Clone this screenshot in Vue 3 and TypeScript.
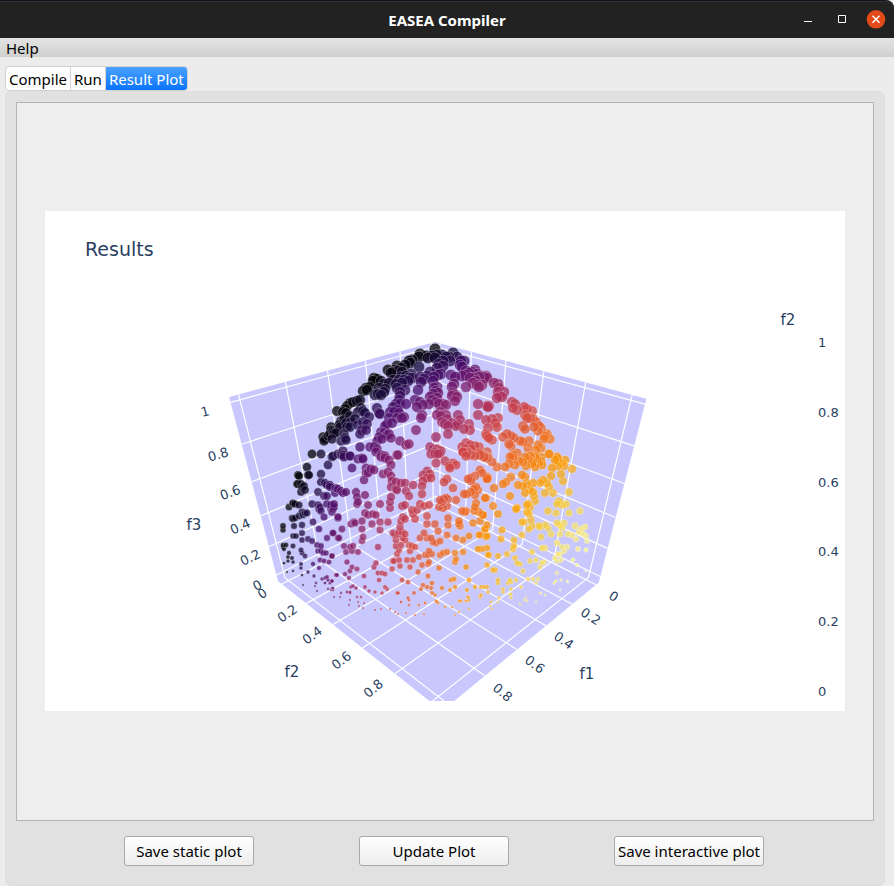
<script setup lang="ts">
import { ref } from 'vue'

type Vec = [number, number, number]
interface Marker { x: number; y: number; r: number; fill: string; depth: number }
interface Label { x: number; y: number; text: string; angle: number }

const tabs = ['Compile', 'Run', 'Result Plot']
const activeTab = ref('Result Plot')

// Homogeneous columns of the projection: origin and the three box axes.
const origin: Vec = [702.5, 808, 1.611]
const axisX: Vec = [-339.4, -49.2, -0.305]
const axisY: Vec = [78.9, -47.8, -0.306]
const axisZ: Vec = [-133.1, -360.3, -0.302]

function mix(a: number, b: number, c: number): Vec {
  return [0, 1, 2].map(i => origin[i] + a * axisX[i] + b * axisY[i] + c * axisZ[i]) as Vec
}
function project(a: number, b: number, c: number): string {
  const v = mix(a, b, c)
  return `${(v[0] / v[2]).toFixed(1)} ${(v[1] / v[2]).toFixed(1)}`
}
const s1 = (f: number) => 0.022 + 0.9425 * f
const s2 = (f: number) => 0.03 + 0.918 * f
const s3 = (f: number) => 0.042 + 0.935 * f

const walls = [
  [project(0, 0, 0), project(1, 0, 0), project(1, 0, 1), project(0, 0, 1)],
  [project(0, 0, 0), project(0, 1, 0), project(0, 1, 1), project(0, 0, 1)],
  [project(0, 0, 0), project(1, 0, 0), project(1, 1, 0), project(0, 1, 0)],
].map(p => `M${p.join('L')}Z`).join('')

const grid = [0, 0.2, 0.4, 0.6, 0.8, 1].map(f => [
  `M${project(s1(f), 0, 1)}L${project(s1(f), 0, 0)}L${project(s1(f), 1, 0)}`,
  `M${project(0, s2(f), 1)}L${project(0, s2(f), 0)}L${project(1, s2(f), 0)}`,
  `M${project(1, 0, s3(f))}L${project(0, 0, s3(f))}L${project(0, 1, s3(f))}`,
].join('')).join('')

const inferno: Vec[] = [
  [0, 0, 4], [27, 12, 65], [74, 12, 107], [120, 28, 109], [165, 44, 96],
  [207, 68, 70], [237, 105, 37], [251, 155, 6], [247, 209, 61], [252, 255, 164],
]
function colour(t: number): string {
  const p = Math.min(0.9999, Math.max(0, t)) * (inferno.length - 1)
  const i = Math.floor(p)
  const c = inferno[i].map((v, k) => Math.round(v + (inferno[i + 1][k] - v) * (p - i)))
  return `rgb(${c.join(',')})`
}

// Front members, as plot positions; their objectives follow from |f| = 1.
const front = `
435,349 420,354 419,357 426,356 428,358 432,356 435,358 437,355 442,355 446,357 449,357 453,353 457,357 450,361 443,361 461,361 464,361 460,365 462,367
409,361 412,360 410,363 405,365 401,368 397,366 395,370 393,372 391,373 388,370 398,371 402,372 374,378 377,379 373,381 381,381 384,384 370,387 367,390 363,391 366,388 379,388 385,389 378,394 375,395 381,395 384,392 360,400 357,401 350,403 353,402 347,406 345,409 343,412 346,413
389,383 393,380 396,384 399,380 401,377 404,380 406,376 409,378 412,378 411,374 408,381 402,383 397,388 405,390 400,392 419,367 437,368 443,366 439,364 430,372 424,379 420,377 427,376 421,382 418,390 438,375 441,374 434,377 451,375 455,377 433,381
466,371 469,373 472,372 475,370 477,374 479,377 474,378 470,378 466,375 473,383 477,385 479,387 476,381 484,377 487,378 462,376 454,384 452,387 466,387
434,388 436,391 438,393 433,394 430,397 432,400 437,398 436,402 437,387 439,404 443,404 446,405 453,393 455,395 457,397 452,396 455,401
420,402 423,405 417,407 422,415 421,418 415,400 429,404 440,412 437,415 441,416 446,415 447,419 442,422 445,424 448,426 452,423 456,426 458,424 460,420 458,415 469,424 470,430 464,429 478,404 487,406 478,415 486,420 488,428 487,436 489,438 448,434 436,437 416,430
400,396 399,400 396,404 400,404 406,404 398,410 393,407 390,412 394,412 399,413 404,417 402,418 397,418 389,418 387,424 392,423 385,426 380,414 377,408 379,413 384,433 387,435 391,438 381,432 379,437 382,439 377,441 389,434 400,441 406,445 409,444 397,455 374,447 370,447 377,449 381,457 385,458
361,408 363,411 365,413 358,412 369,417 355,419 350,416 344,420 346,423 341,421 351,422 350,427 347,427 358,425 363,422 367,424 362,430 366,430 360,434 339,425 331,430 334,433 332,439 340,427 344,434 345,438 341,441 346,440 343,451 342,455 344,457 360,447 350,456 362,458
430,447 433,449 437,449 435,452 438,454 441,451 431,454 462,447 466,443 470,445 465,449 468,452 471,449 463,452 475,446 479,447 482,455 485,457 466,456 488,458
337,411 331,427 333,431 328,436 323,437 324,441 325,439 330,434 336,433 312,454 321,454 333,456 338,454
307,467 308,475 309,475 299,476 298,475 298,484 297,484 301,484 304,486 302,487 305,490 301,492 321,474 328,465 321,482 325,483 327,485 330,487 318,492 324,496 327,496 335,493 338,489 289,507 293,504 295,504 299,505 293,503 312,504 318,505 320,507 321,511 319,509 327,504 334,504 331,509 333,509 324,517 292,518 295,518 293,519 299,516 302,512 305,513 307,513 303,515 313,522 283,526 283,530 294,526 302,525 319,529 338,517 333,533 302,533 293,536 296,536 302,540 308,539 312,541 327,538 338,538 283,545 286,545 283,547 284,549 293,546 317,545 321,546 301,550 302,553 305,556 289,553 288,557 292,558 288,561 293,562 284,563 318,551 321,551 323,553 326,553 332,556 320,560 324,561 329,562 301,564 301,568 313,564 319,568 287,572 293,571 308,572 302,575 314,576 337,575 322,579 325,578 327,577 328,580 332,581 316,583 303,585 315,586 330,583 325,583 332,588 328,589 333,590 317,591 334,597
332,457 341,454 344,455 350,456 358,459 363,459 352,468 376,452 381,455 385,456 389,460 398,455 391,465 366,468 369,471 371,469 368,473 366,473 374,470 364,480 383,474 388,472 391,476 392,481 391,487 396,482 401,483 405,483 396,489 397,490 406,491 391,497 390,502 409,496 413,485 423,475 427,471 430,474 427,478 423,481 431,478 422,486 422,494 444,482 447,479 453,488 438,450 440,453 435,454 436,463 445,461 449,466 450,468 453,463 456,465 463,452 467,453 471,455 475,456 479,453 480,455 484,457 488,457 487,452
330,485 336,488 341,491 346,492 343,493 331,505 334,507 332,512 338,518 333,533 342,529 339,538 356,492 357,497 358,502 365,495 357,504 368,505 380,504 390,508 365,513 368,515 373,514 376,515 402,506 405,505 420,504 424,506 429,505 417,510 412,510 413,514 427,516 403,517 405,519 401,521 415,519 388,522 380,522 372,524 362,521 354,522 351,524 362,529 355,523 380,530 400,527 399,532 393,533 395,535 398,534 402,532 405,534 403,538 396,540 363,537 362,541 427,524 435,524 424,533 427,538 420,538 431,538 438,531 448,518 448,525 459,524 460,526 459,521 447,535 456,538 463,540 440,541 436,543 433,542
440,500 444,499 446,498 448,499 442,502 456,500 439,507 443,508 447,506 464,494 467,494 471,492 474,489 476,487 478,490 475,495 468,479 471,478 471,481 475,476 482,473 487,477 487,479 476,503 475,507 474,511 462,511 465,512 466,511 479,512 483,515 473,523 480,521 487,525 485,529 479,535 481,535 469,536 487,536 485,498
344,546 350,547 353,546 346,552 352,551 358,552 332,556 347,562 352,567 357,569 350,571 349,578 345,574 336,575 332,581 364,576 378,547 396,546 399,550 397,554 405,540 409,545 412,546 401,545 415,547 410,551 399,560 394,561 393,561 407,560 413,560 419,557 429,551 425,555 428,555 432,554 429,562 428,564 422,565 410,567 400,566 392,569 376,563 374,567 378,573 382,573 385,574 379,580 402,580 408,582 418,572 428,576 439,568 440,555 443,553 447,552 455,553 456,559 455,562 463,552 466,567 451,580 454,579 469,580 478,549 482,549 487,548 488,555 487,565
351,587 353,586 356,588 365,587 369,591 375,592 385,587 387,589 382,593 397,593 398,593 408,598 423,585 432,583 431,588 427,587 421,589 414,593 432,593 442,588 450,590 455,587 467,590 475,587 481,587 487,587 468,597 480,597 333,588 331,590 350,592 357,597 341,593 340,597
481,376 484,377 486,376 482,385 494,383 498,384 499,388 498,392 500,396 502,397 497,398 504,392 489,406 488,407 512,402 515,404 513,408 517,410 524,407 527,409 532,411 525,415 527,418 530,418 523,426 525,429 533,419 536,422 539,426 534,427 541,428 538,431 547,434 545,436 550,439 544,439 492,419 498,418 495,423 497,427 486,434 492,440 507,434 503,437 511,436 514,438 511,446 509,444 520,441 523,442 529,441 528,448 538,445 541,448 536,450 517,453 484,455 513,458 525,457 530,456 535,457 549,454 557,457 558,459 565,460 541,457
485,456 487,458 492,462 497,467 505,467 509,464 515,465 519,461 510,457 513,455 523,462 528,459 531,457 533,462 537,459 526,466 532,464 539,463 542,465 535,467 541,461 549,454 555,460 559,461 562,463 558,466 552,468 564,466 572,469 561,474 551,476 563,481 480,470 487,478 488,478 494,488 503,484 506,482 511,477 522,475 525,477 518,485 523,486 527,484 533,483 540,483 543,480 547,483 549,487 545,493 553,493 525,493 533,492 530,490 534,496 569,492 510,496 535,501 528,504 530,507 527,505 486,498 493,506 517,508 516,509 527,512 529,514 559,501 557,504 562,505 566,504 548,511 556,513 569,513 580,511
522,522 524,522 531,520 529,529 532,526 539,526 540,527 545,525 548,528 551,534 557,523 560,525 564,523 562,528 575,526 581,529 585,527 579,532 583,534 586,536 587,541 576,539 572,535 568,534 560,534 485,529 486,537 483,515 498,514 502,530 501,539 522,535 514,540 514,546 513,549 541,537 542,548 545,548 557,543 562,547 567,547 564,551 578,549 586,550 558,554 560,554 555,558 561,560 557,561 489,555 498,556 507,554 515,558 517,563 520,564 532,552 530,561 536,560 542,563 540,567 544,562 573,560 577,565 523,571 493,570 495,570 498,580 498,583 510,580 511,582 508,583 516,580 528,579 533,579 538,579 536,583 557,573 556,581 554,583 561,580 567,581 568,582 578,574 586,571 521,587 511,589 510,595 503,592 484,587 488,592 481,595 499,598 526,598 540,593 545,595
347,592 350,593 350,600 361,597 358,602 349,605 359,606 363,608 364,603 375,610 381,609 390,609 395,612 398,614 406,613 415,615 424,614 419,605 409,600 409,605 401,602 425,603 437,602 438,603 435,595 436,601 445,607 452,607 459,601 461,601 466,601 469,600 469,609 455,615 459,612 491,602 490,606 492,609 498,602 503,589 511,594 511,598 524,600 520,604 527,601 536,602 541,593 560,590
`

const base = mix(s1(0), s2(0), s3(0))
const g1 = axisX.map(v => v * 0.9425)
const g2 = axisY.map(v => v * 0.918)
const g3 = axisZ.map(v => v * 0.935)

// Intersects the view ray through a plot position with the unit sphere.
function locate(x: number, y: number): Marker {
  const rows = [x, y].map((p, i) => [g1, g2, g3, base].map(c => c[i] - p * c[2]))
  const [a, b] = rows
  const det = a[0] * b[1] - a[1] * b[0]
  const solve = (k: number) => [
    -(a[k] * b[1] - a[1] * b[k]) / det,
    -(a[0] * b[k] - a[k] * b[0]) / det,
  ]
  const slope = solve(2)
  const start = solve(3)
  const qa = slope[0] ** 2 + slope[1] ** 2 + 1
  const qb = slope[0] * start[0] + slope[1] * start[1]
  const qc = start[0] ** 2 + start[1] ** 2 - 1
  const f3 = (-qb + Math.sqrt(Math.max(0, qb * qb - qa * qc))) / qa
  const f1 = start[0] + slope[0] * f3
  const f2 = start[1] + slope[1] * f3
  const r = Math.max(1.2, 5.8 * Math.sqrt(Math.max(0, f3)))
  return { x, y, r, fill: colour(f2), depth: f1 + f2 + f3 }
}

const markers = front.trim().split(/\s+/)
  .map(p => p.split(',').map(Number))
  .map(([x, y]) => locate(x, y))
  .sort((m, n) => m.depth - n.depth)

const ticks: Label[] = [
  { x: 205, y: 411, text: '1', angle: -15 },
  { x: 218, y: 454, text: '0.8', angle: -17 },
  { x: 230, y: 492, text: '0.6', angle: -20 },
  { x: 240, y: 526, text: '0.4', angle: -23 },
  { x: 250, y: 557, text: '0.2', angle: -25 },
  { x: 257, y: 585, text: '0', angle: -28 },
  { x: 262, y: 593, text: '0', angle: -33 },
  { x: 287, y: 613, text: '0.2', angle: -34 },
  { x: 312, y: 635, text: '0.4', angle: -36 },
  { x: 341, y: 660, text: '0.6', angle: -38 },
  { x: 373, y: 688, text: '0.8', angle: -40 },
  { x: 614, y: 596, text: '0', angle: 32 },
  { x: 591, y: 616, text: '0.2', angle: 33 },
  { x: 564, y: 640, text: '0.4', angle: 35 },
  { x: 535, y: 664, text: '0.6', angle: 37 },
  { x: 503, y: 692, text: '0.8', angle: 40 },
]
const scale = ['1', '0.8', '0.6', '0.4', '0.2', '0']
</script>

<template>
  <div class="window">
    <header class="titlebar">
      <h1>EASEA Compiler</h1>
      <div class="controls">
        <button type="button" aria-label="Minimize">
          <svg width="20" height="20" viewBox="0 0 20 20"><path d="M6 11.500h8" stroke="#fff" /></svg>
        </button>
        <button type="button" aria-label="Maximize">
          <svg width="20" height="20" viewBox="0 0 20 20"><path d="M6.500 5.500h7v7h-7z" fill="none" stroke="#fff" /></svg>
        </button>
        <button type="button" aria-label="Close">
          <svg width="20" height="20" viewBox="0 0 20 20">
            <circle cx="10" cy="9.300" r="9.300" fill="#e24a19" />
            <path d="M6.500 5.800l7 7M13.500 5.800l-7 7" stroke="#fff" stroke-width="1.500" />
          </svg>
        </button>
      </div>
    </header>

    <nav class="menubar"><button type="button">Help</button></nav>

    <main class="body">
      <div class="tabs" role="tablist">
        <button
          v-for="tab in tabs"
          :key="tab"
          type="button"
          role="tab"
          :aria-selected="tab === activeTab"
          :class="{ active: tab === activeTab }"
          @click="activeTab = tab"
        >{{ tab }}</button>
      </div>

      <section class="pane">
        <div class="canvas">
          <svg class="plot" viewBox="45 211 800 500" role="img" aria-label="Results">
            <defs>
              <clipPath id="scene"><rect x="45" y="271" width="800" height="430" /></clipPath>
            </defs>
            <rect x="45" y="211" width="800" height="500" fill="#fff" />
            <g clip-path="url(#scene)">
              <path :d="walls" fill="#c8c8ff" />
              <path :d="grid" fill="none" stroke="#fff" stroke-width="1.200" />
              <circle
                v-for="(m, i) in markers"
                :key="i"
                :cx="m.x"
                :cy="m.y"
                :r="m.r"
                :fill="m.fill"
                class="marker"
              />
            </g>
            <text class="title" x="85" y="256">Results</text>
            <g class="tick">
              <text
                v-for="(t, i) in ticks"
                :key="i"
                :transform="`translate(${t.x} ${t.y}) rotate(${t.angle})`"
                text-anchor="middle"
                dy="5"
              >{{ t.text }}</text>
              <text v-for="(t, i) in scale" :key="t" x="818" :y="347 + i * 69.800">{{ t }}</text>
            </g>
            <g class="axis" text-anchor="middle">
              <text x="194" y="530">f3</text>
              <text x="292" y="677">f2</text>
              <text x="587" y="679">f1</text>
              <text x="788" y="325">f2</text>
            </g>
          </svg>
        </div>
        <div class="actions">
          <button type="button" class="narrow">Save static plot</button>
          <button type="button">Update Plot</button>
          <button type="button">Save interactive plot</button>
        </div>
      </section>
    </main>
  </div>
</template>

<style>
body {
  margin: 0;
  background: #ececec;
}
</style>

<style scoped>
.window {
  display: flex;
  flex-direction: column;
  min-height: 100vh;
  font-family: "Noto Sans", "Open Sans", sans-serif;
  font-size: 15px;
  line-height: 20px;
  color: #000;
  background: #ececec;
}
button {
  margin: 0;
  padding: 0;
  border: 0;
  background: none;
  color: inherit;
  font: inherit;
}
.titlebar {
  display: grid;
  grid-template-columns: 1fr auto 1fr;
  align-items: center;
  box-sizing: border-box;
  height: 38px;
  padding: 0 8px;
  border-top: 1px solid #15131f;
  border-radius: 0 8px 0 0;
  background: #222;
  box-shadow: inset 0 1px #323232;
}
h1 {
  grid-column: 2;
  margin: 0;
  color: #fff;
  font-size: 15px;
  font-weight: 700;
}
.controls {
  display: flex;
  justify-content: flex-end;
  gap: 14px;
}
.controls svg {
  display: block;
}
.menubar {
  height: 19px;
  padding: 0 6px;
  background: linear-gradient(#e4e4e4, #cfd0ce);
}
.body {
  display: flex;
  flex: 1;
  flex-direction: column;
  padding: 9px 9px 0 5px;
}
.tabs {
  display: flex;
  align-self: flex-start;
  overflow: hidden;
  border: 1px solid #d2d2d2;
  border-radius: 4px;
  background: #fdfdfd;
}
.tabs button {
  height: 23px;
  padding: 0 3px;
}
.tabs button + button {
  border-left: 1px solid #d6d6d6;
}
.tabs .active {
  color: #fff;
  background: linear-gradient(#4ba2ff, #0a74ff);
}
.pane {
  display: flex;
  flex: 1;
  flex-direction: column;
  padding: 10px;
  border: 1px solid #dedede;
  border-radius: 6px;
  background: #e1e1e1;
}
.canvas {
  display: flex;
  flex: 1;
  align-items: center;
  justify-content: center;
  padding-bottom: 2px;
  border: 1px solid #b4b4b4;
  background: #eee;
}
.plot {
  display: block;
  width: 100%;
  max-width: 800px;
}
.marker {
  opacity: 0.75;
  stroke: rgba(255, 255, 255, 0.5);
  stroke-width: 0.7px;
}
.title,
.tick,
.axis {
  fill: #2a3f5f;
  font-family: "DejaVu Sans", sans-serif;
}
.title {
  font-size: 19px;
}
.tick {
  font-size: 13px;
}
.axis {
  font-size: 15px;
}
.actions {
  display: flex;
  justify-content: center;
  gap: 105px;
  padding: 15px 2px 9px 0;
}
.actions button {
  width: 150px;
  height: 30px;
  border: 1px solid #a9a9a9;
  border-radius: 3px;
  background: linear-gradient(#fff, #ededed);
  white-space: nowrap;
}
.actions .narrow {
  width: 130px;
}
</style>
